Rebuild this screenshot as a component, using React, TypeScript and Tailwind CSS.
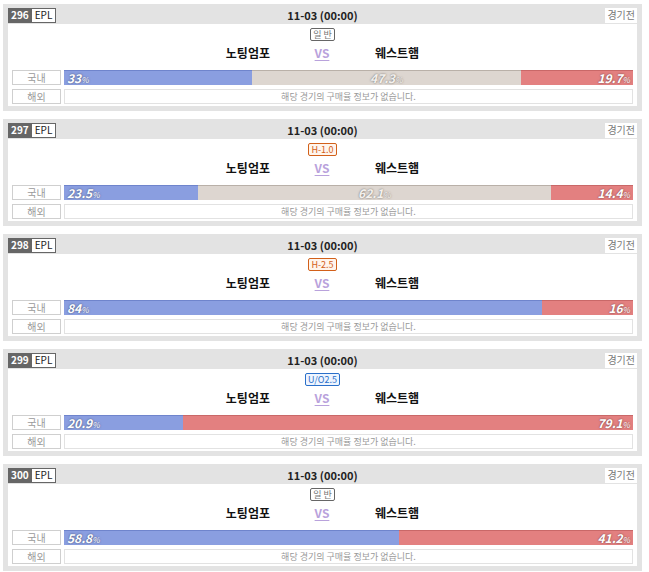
type Match = {
  no: number;
  kind: string;
  tone: "plain" | "handi" | "uo";
  home: number;
  draw?: number;
  away: number;
};

const matches: Match[] = [
  { no: 296, kind: "일 반", tone: "plain", home: 33, draw: 47.3, away: 19.7 },
  { no: 297, kind: "H-1.0", tone: "handi", home: 23.5, draw: 62.1, away: 14.4 },
  { no: 298, kind: "H-2.5", tone: "handi", home: 84, away: 16 },
  { no: 299, kind: "U/O2.5", tone: "uo", home: 20.9, away: 79.1 },
  { no: 300, kind: "일 반", tone: "plain", home: 58.8, away: 41.2 },
];

const kindStyle = {
  plain: "border-[#666] text-[#777] bg-white",
  handi: "border-[#d2601a] text-[#d2601a] bg-[#fff5ec]",
  uo: "border-[#2a6fc9] text-[#2a6fc9] bg-[#eef5ff]",
};

function Pct({ v, light }: { v: number; light?: boolean }) {
  return (
    <span
      className={`italic font-bold text-[12px] leading-none ${light ? "text-[#f4f1ee]" : "text-white"} [text-shadow:0_0_2px_rgba(0,0,0,0.55)]`}
    >
      {v}
      <span className="text-[8px] font-normal">%</span>
    </span>
  );
}

function Bar({ m }: { m: Match }) {
  return (
    <div className="flex-1 flex h-[15px]">
      <div
        className="flex items-center px-[3px] bg-[#8a9ee0] border-t border-[#6f84cc]"
        style={{ width: `${m.home}%` }}
      >
        <Pct v={m.home} />
      </div>
      {m.draw !== undefined && (
        <div
          className="flex items-center justify-center bg-[#ddd6d0] border-t border-[#b9b0a8]"
          style={{ width: `${m.draw}%` }}
        >
          <Pct v={m.draw} light />
        </div>
      )}
      <div
        className="flex items-center justify-end px-[3px] bg-[#e38080] border-t border-[#c96868]"
        style={{ width: `${m.away}%` }}
      >
        <Pct v={m.away} />
      </div>
    </div>
  );
}

function Label({ text }: { text: string }) {
  return (
    <div className="w-[49px] h-[15px] shrink-0 border border-[#cfcfcf] bg-white flex items-center justify-center text-[10px] text-[#9a9a9a] leading-none">
      {text}
    </div>
  );
}

function Card({ m }: { m: Match }) {
  return (
    <div className="bg-[#e3e3e3] px-[5px] pt-[3px] pb-[5px]">
      <div className="flex items-center h-[16px] mb-[1px]">
        <div className="flex w-[200px] h-[15px]">
          <span className="bg-[#666] text-white font-bold text-[10px] leading-none flex items-center px-[3px]">
            {m.no}
          </span>
          <span className="bg-white border border-[#666] border-l-0 text-[#222] text-[10px] leading-none flex items-center px-[3px]">
            EPL
          </span>
        </div>
        <div className="flex-1 text-center font-bold text-[11px] text-[#222] leading-none">
          11-03 (00:00)
        </div>
        <div className="w-[200px] flex justify-end">
          <span className="bg-white text-[#777] text-[10px] leading-none px-[2px] h-[15px] flex items-center">
            경기전
          </span>
        </div>
      </div>
      <div className="bg-white px-[4px] pt-[4px] pb-[2px]">
        <div className="flex justify-center h-[13px]">
          <span
            className={`border rounded-[2px] text-[9px] leading-none px-[2px] flex items-center ${kindStyle[m.tone]}`}
          >
            {m.kind}
          </span>
        </div>
        <div className="flex items-center h-[14px] mt-[5px] text-[12px] font-bold leading-none">
          <div className="flex-1 text-right pr-[52px] text-[#111]">노팅엄포</div>
          <div className="w-[0px] flex justify-center">
            <span className="text-[#b9a2dc] underline underline-offset-2">VS</span>
          </div>
          <div className="flex-1 pl-[53px] text-[#111]">웨스트햄</div>
        </div>
        <div className="flex gap-[3px] mt-[10px]">
          <Label text="국내" />
          <Bar m={m} />
        </div>
        <div className="flex gap-[3px] mt-[4px]">
          <Label text="해외" />
          <div className="flex-1 h-[15px] border border-[#e2e2e2] flex items-center justify-center text-[9px] text-[#999] leading-none">
            해당 경기의 구매율 정보가 없습니다.
          </div>
        </div>
      </div>
    </div>
  );
}

export default function App() {
  return (
    <div
      className="w-[649px] h-[572px] bg-white pt-[4px] px-[3px] pr-[7px] flex flex-col gap-[8px]"
      style={{ fontFamily: '"Noto Sans CJK KR", "Noto Sans", sans-serif' }}
    >
      {matches.map((m) => (
        <Card key={m.no} m={m} />
      ))}
    </div>
  );
}
